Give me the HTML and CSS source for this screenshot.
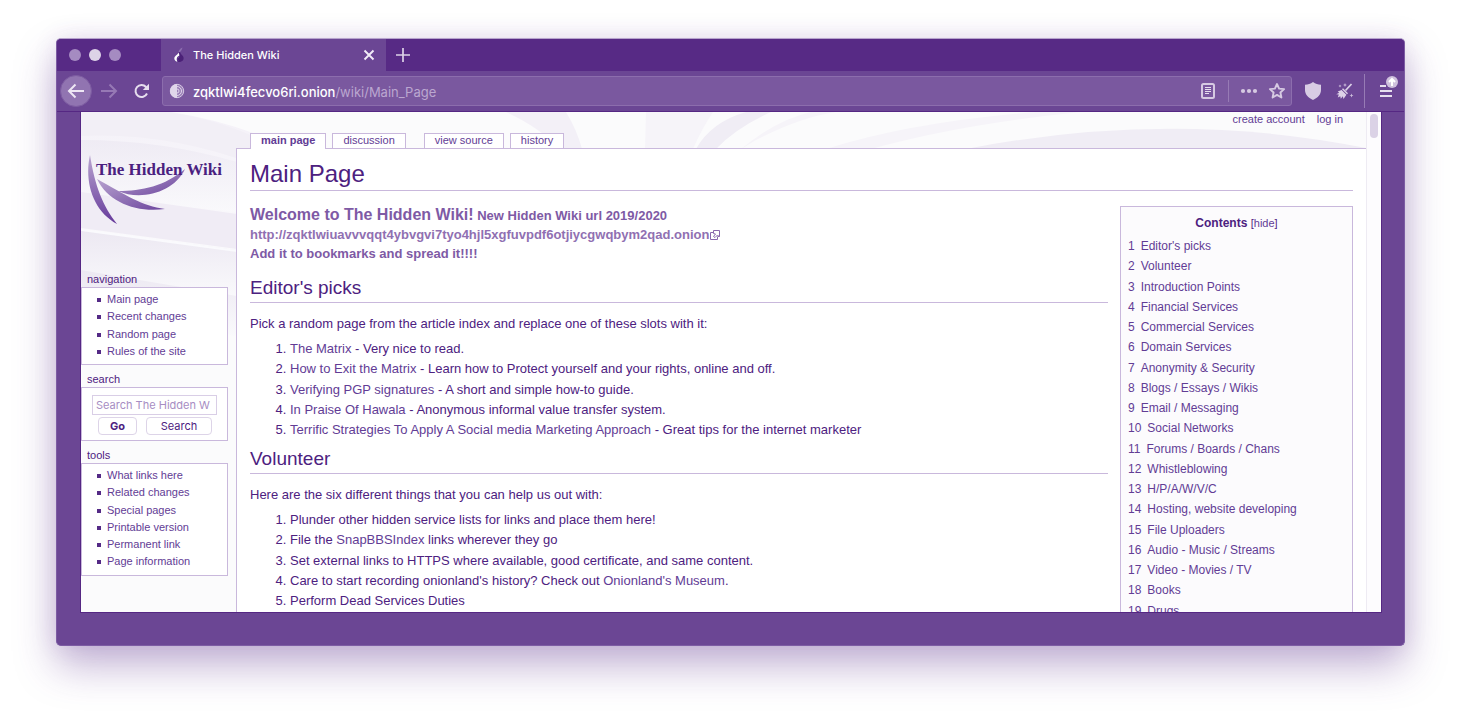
FILE: index.html
```html
<!DOCTYPE html>
<html lang="en">
<head>
<meta charset="utf-8">
<title>The Hidden Wiki</title>
<link rel="stylesheet" href="styles.css">
</head>
<body>
<div class="window">
  <header class="titlebar">
    <div class="lights"><i></i><i class="bright"></i><i></i></div>
    <div class="browser-tab">
      <svg width="16" height="16" viewBox="0 0 16 16" aria-hidden="true"><path d="M7.500 5C8 3 9 1.500 11.500.5 11 2.500 10 4 9 5z" fill="#8c6dae"/><path d="M7.500 5.500C7.500 8 4 8.500 3.700 11c-.3 2.300 1.500 4 4 4 4 0 5.500-2.500 4.700-5C11.700 8 9.500 7.500 9 5z" fill="#4b2177"/><path d="M7.500 5.500C7 8 3.300 8.500 3.300 11.500c0 2 1.700 3.200 3.200 3.200C5.300 13 6 11.500 7.800 10c.7-.8.700-3-.3-4.500" fill="#fff"/><path d="M7.800 9.200c-2.300 2-1.800 4.300-.1 4.600" stroke="#5b2f8b" stroke-width="1.200" fill="none"/></svg>
      <span class="tab-title">The Hidden Wiki</span>
      <button class="icon" aria-label="Close tab"><svg width="12" height="12" viewBox="0 0 12 12"><path d="M1.500 1.500l9 9m0-9l-9 9" stroke="#f2edf7" stroke-width="1.900" fill="none"/></svg></button>
    </div>
    <button class="icon new-tab" aria-label="New tab"><svg width="14" height="14" viewBox="0 0 14 14"><path d="M7 0v14M0 7h14" stroke="#ddd2e8" stroke-width="1.700"/></svg></button>
  </header>
  <div class="toolbar">
    <button class="icon back" aria-label="Back"><svg width="18" height="16" viewBox="0 0 18 16"><path d="M8.500 1.500L2 8l6.500 6.500M2 8h15" fill="none" stroke="#eee7f4" stroke-width="2"/></svg></button>
    <button class="icon forward" aria-label="Forward"><svg width="18" height="16" viewBox="0 0 18 16"><path d="M9.500 1.500L16 8l-6.500 6.500M16 8H1" fill="none" stroke="#9679b5" stroke-width="2"/></svg></button>
    <button class="icon reload" aria-label="Reload"><svg width="18" height="16" viewBox="0 0 18 16"><path d="M14 10.500A6 6 0 1 1 13 4l2 2" fill="none" stroke="#e6deee" stroke-width="2"/><path d="M16 .8V7H9.800z" fill="#e6deee"/></svg></button>
    <div class="urlbar">
      <svg width="16" height="16" viewBox="0 0 16 16" aria-hidden="true"><circle cx="8" cy="8" r="6.700" fill="#9c80b9" stroke="#d5c8e2"/><path d="M8 1a7 7 0 0 0 0 14z" fill="#e0d6ea"/><path d="M8 3.500a4.500 4.500 0 0 1 0 9M8 6a2 2 0 0 1 0 4" fill="none" stroke="#e0d6ea"/></svg>
      <span class="url"><b>zqktlwi4fecvo6ri.onion</b>/wiki/Main_Page</span>
      <button class="icon" aria-label="Reader view"><svg width="16" height="18" viewBox="0 0 16 18"><rect x="2" y="2" width="12" height="14" rx="1.500" fill="none" stroke="#d6cae2" stroke-width="2"/><path d="M5 5.500h6M5 7.500h6M5 9.500h6M5 11.500h4" stroke="#e6deee"/></svg></button>
      <span class="rule"></span>
      <button class="icon dots" aria-label="Page actions"><svg width="18" height="6" viewBox="0 0 18 6"><g fill="#d6cae2"><circle cx="3" cy="3" r="2.100"/><circle cx="9" cy="3" r="2.100"/><circle cx="15" cy="3" r="2.100"/></g></svg></button>
      <button class="icon" aria-label="Bookmark"><svg width="18" height="18" viewBox="0 0 18 18"><path d="M9 2l2.100 4.600 5 .5-3.700 3.400 1 5L9 12.900l-4.400 2.600 1-5L1.900 7.100l5-.5z" fill="none" stroke="#d6cae2" stroke-width="1.900" stroke-linejoin="round"/></svg></button>
    </div>
    <button class="icon shield" aria-label="Security level"><svg width="18" height="20" viewBox="0 0 18 20"><path d="M9 1c2.500 2 5 2.600 8 2.800V9c0 4.500-3 7.500-8 10C4 16.500 1 13.500 1 9V3.800C4 3.600 6.500 3 9 1z" fill="#d8cce4"/></svg></button>
    <button class="icon broom" aria-label="New identity"><svg width="18" height="18" viewBox="0 0 18 18"><path d="M15.500 2L9.500 8.500" stroke="#ddd2e8" stroke-width="1.700"/><path d="M7 6.300l5 5-1 1-5-5z" fill="#ddd2e8"/><path d="M5.600 7.900L10.400 12.700 7.500 17l-.7-2.800-2 2.600-.5-2.500-2.500 1.300 1-3-2.600-.3 3-1.500-1.500-1.200z" fill="#ddd2e8"/><path d="M9 1l.6 1.400L11 3l-1.400.6L9 5l-.6-1.400L7 3l1.400-.6zM4 2.500l.5 1 1 .5-1 .5-.5 1-.5-1-1-.5 1-.5zM15.500 11.500l.6 1.400 1.400.6-1.400.6-.6 1.400-.6-1.400-1.400-.6 1.400-.6z" fill="#cbbcdb"/></svg></button>
    <span class="rule tall"></span>
    <button class="icon menu" aria-label="Menu"><svg width="22" height="24" viewBox="0 0 22 24"><path d="M3 11h6M3 16h12M3 21h12" stroke="#e6deee" stroke-width="2"/><circle cx="15" cy="7" r="6" fill="#cfc1dd"/><path d="M15 11V4.500M12 7l3-3 3 3" fill="none" stroke="#fff" stroke-width="2"/></svg></button>
  </div>
  <div class="viewport">
    <div class="page">
      <svg class="backdrop" viewBox="0 0 1285 260" width="1285" height="260" aria-hidden="true">
        <defs>
          <linearGradient id="band" x1="0" y1="0" x2="0" y2="1"><stop offset="0" stop-color="#ece8f2"/><stop offset="1" stop-color="#fafafc"/></linearGradient>
          <linearGradient id="fall" x1="0" y1="0" x2="0" y2="1"><stop offset="0" stop-color="#f4f1f8"/><stop offset="1" stop-color="#fcfcfd"/></linearGradient>
        </defs>
        <path d="M0 0H90Q140 8 180 24V180L0 160z" fill="url(#fall)"/>
        <path d="M85 0Q135 6 190 32L180 55Q90 20 0 24V0z" fill="#f2eff6"/>
        <path d="M0 28Q80 28 156 50V100L0 84z" fill="url(#band)" opacity=".7"/>
        <path d="M0 80L156 102V137L0 116z" fill="#f0ecf5"/>
        <path d="M0 118L156 138V188L0 160z" fill="url(#band)"/>
        <path d="M0 118L156 139" stroke="#fafafd" stroke-width="2"/>
        <path d="M0 158Q80 172 156 184V225L0 180z" fill="url(#band)"/>
        <path d="M425 0H485Q496 18 501 37H478Q460 16 425 0z" fill="#f3f0f7"/>
        <path d="M565 0h67Q620 18 612 37h-48z" fill="#f6f4f9"/>
        <path d="M665 0h25Q655 16 635 37h-20Q630 10 665 0z" fill="#f0edf5"/>
        <path d="M675 28Q720 5 755 0h-25Q695 8 660 37z" fill="#f6f4f9"/>
        <path d="M835 0h120Q830 10 745 37h45Q880 12 1000 0z" fill="#f6f4f9"/>
        <path d="M885 37Q1090-3 1285 36v1z" fill="#f0edf5"/>
      </svg>
      <aside class="sidebar">
        <a class="logo" href="#" aria-label="The Hidden Wiki"><svg width="140" height="78" viewBox="0 0 140 78">
          <defs><linearGradient id="blade" x1="0" y1="0" x2="0" y2="1"><stop offset="0" stop-color="#b9a5d0"/><stop offset="1" stop-color="#65399a"/></linearGradient><linearGradient id="arc" x1="0" y1="0" x2="1" y2="1"><stop offset="0" stop-color="#b7a2cf"/><stop offset="1" stop-color="#6d469e"/></linearGradient></defs>
          <path d="M4 2C-2 29 7 58 31 71 17 53 9 34 4 2z" fill="url(#blade)"/>
          <path d="M11 26C22 49 50 60 79 56 56 53 40 42 11 26z" fill="url(#arc)"/>
          <path d="M32 38C54 48 88 40 99 16 79 33 56 38 32 38z" fill="url(#arc)"/>
          <text x="10" y="22" class="logo-text">The Hidden Wiki</text>
        </svg></a>
        <nav>
          <h3>navigation</h3>
          <ul class="portlet">
            <li><a href="#">Main page</a></li><li><a href="#">Recent changes</a></li><li><a href="#">Random page</a></li><li><a href="#">Rules of the site</a></li>
          </ul>
        </nav>
        <section>
          <h3><label for="q">search</label></h3>
          <form class="portlet search">
            <input id="q" type="text" placeholder="Search The Hidden W">
            <div class="buttons"><button type="button" class="go">Go</button><button type="button" class="find">Search</button></div>
          </form>
        </section>
        <nav>
          <h3>tools</h3>
          <ul class="portlet">
            <li><a href="#">What links here</a></li><li><a href="#">Related changes</a></li><li><a href="#">Special pages</a></li><li><a href="#">Printable version</a></li><li><a href="#">Permanent link</a></li><li><a href="#">Page information</a></li>
          </ul>
        </nav>
      </aside>
      <div class="main">
        <div class="head">
          <nav class="wiki-tabs"><a class="current" href="#">main page</a><a href="#">discussion</a><a class="apart" href="#">view source</a><a href="#">history</a></nav>
          <nav class="personal"><a href="#">create account</a><a href="#">log in</a></nav>
        </div>
        <main class="content">
          <h1>Main Page</h1>
          <div class="columns">
            <article>
              <p class="welcome"><big>Welcome to The Hidden Wiki!</big> New Hidden Wiki url 2019/2020<br><a href="#">http://zqktlwiuavvvqqt4ybvgvi7tyo4hjl5xgfuvpdf6otjiycgwqbym2qad.onion<svg class="ext" width="12" height="12" viewBox="0 0 12 12" aria-hidden="true"><path d="M4.500 3.500h-3v7h7v-3M4.500 1.500h6v6h-1.500M4.500 1.500v3l2 .5-2 2.500 1.500 1L8.500 6l1.500 1.500" fill="none" stroke="#8a68ad"/></svg></a><br>Add it to bookmarks and spread it!!!!</p>
              <h2>Editor's picks</h2>
              <p>Pick a random page from the article index and replace one of these slots with it:</p>
              <ol>
                <li><a href="#">The Matrix</a> - Very nice to read.</li>
                <li><a href="#">How to Exit the Matrix</a> - Learn how to Protect yourself and your rights, online and off.</li>
                <li><a href="#">Verifying PGP signatures</a> - A short and simple how-to guide.</li>
                <li><a href="#">In Praise Of Hawala</a> - Anonymous informal value transfer system.</li>
                <li><a href="#">Terrific Strategies To Apply A Social media Marketing Approach</a> - Great tips for the internet marketer</li>
              </ol>
              <h2>Volunteer</h2>
              <p>Here are the six different things that you can help us out with:</p>
              <ol>
                <li>Plunder other hidden service lists for links and place them here!</li>
                <li>File the <a href="#">SnapBBSIndex</a> links wherever they go</li>
                <li>Set external links to HTTPS where available, good certificate, and same content.</li>
                <li>Care to start recording onionland's history? Check out <a href="#">Onionland's Museum</a>.</li>
                <li>Perform Dead Services Duties</li>
              </ol>
            </article>
            <nav class="toc">
              <div class="toc-title"><b>Contents</b> <span>[<a href="#">hide</a>]</span></div>
              <ul>
                <li><a href="#"><span>1</span>Editor's picks</a></li>
                <li><a href="#"><span>2</span>Volunteer</a></li>
                <li><a href="#"><span>3</span>Introduction Points</a></li>
                <li><a href="#"><span>4</span>Financial Services</a></li>
                <li><a href="#"><span>5</span>Commercial Services</a></li>
                <li><a href="#"><span>6</span>Domain Services</a></li>
                <li><a href="#"><span>7</span>Anonymity &amp; Security</a></li>
                <li><a href="#"><span>8</span>Blogs / Essays / Wikis</a></li>
                <li><a href="#"><span>9</span>Email / Messaging</a></li>
                <li><a href="#"><span>10</span>Social Networks</a></li>
                <li><a href="#"><span>11</span>Forums / Boards / Chans</a></li>
                <li><a href="#"><span>12</span>Whistleblowing</a></li>
                <li><a href="#"><span>13</span>H/P/A/W/V/C</a></li>
                <li><a href="#"><span>14</span>Hosting, website developing</a></li>
                <li><a href="#"><span>15</span>File Uploaders</a></li>
                <li><a href="#"><span>16</span>Audio - Music / Streams</a></li>
                <li><a href="#"><span>17</span>Video - Movies / TV</a></li>
                <li><a href="#"><span>18</span>Books</a></li>
                <li><a href="#"><span>19</span>Drugs</a></li>
              </ul>
            </nav>
          </div>
        </main>
      </div>
    </div>
    <div class="scrollbar"><span></span></div>
  </div>
</div>
</body>
</html>
```

FILE: styles.css
```css
* { box-sizing: border-box; }
body {
  margin: 0;
  height: 100vh;
  padding: 38px 56px 74px;
  display: flex;
  overflow: hidden;
  background: #fff;
  color: #4d2180;
  font: 12px/20px "Liberation Sans", Arial, sans-serif;
}
a { color: #623c95; text-decoration: none; }
h1, h2, h3, p, ul, ol { margin: 0; padding: 0; font-weight: normal; }
button, input { font: inherit; color: inherit; margin: 0; }
svg { display: block; flex: none; }
.icon { display: flex; align-items: center; justify-content: center; flex: none; padding: 0; border: 0; background: none; }

.window {
  flex: 1;
  min-width: 0;
  display: flex;
  flex-direction: column;
  border-radius: 5px;
  background: #6b4694;
  border: 1px solid #7d5ca3;
  border-top-color: #b7a4cd;
  box-shadow: 0 20px 40px rgba(90, 43, 138, .36), 0 0 24px rgba(90, 43, 138, .1);
}
.titlebar { display: flex; flex: none; height: 32px; background: #572a85; border-radius: 4px 4px 0 0; }
.lights { display: flex; align-items: center; gap: 8px; width: 104px; padding-left: 12px; }
.lights i { width: 12px; height: 12px; border-radius: 50%; background: #a58bc1; }
.lights .bright { background: #ddd3e7; }
.browser-tab { display: flex; align-items: center; width: 225px; padding: 0 11px 0 10px; gap: 6px; background: #6b4694; color: #fff; font: 500 11px/16px Inter, sans-serif; }
.tab-title { flex: 1; }
.new-tab { width: 34px; }

.toolbar { display: flex; flex: none; align-items: center; height: 41px; padding: 0 5px 0 3px; border-bottom: 1px solid #552783; }
.back { width: 32px; height: 32px; border-radius: 50%; background: #9174b1; border: 1px solid #7d5ca1; }
.forward { width: 34px; }
.reload { width: 32px; margin-right: 4px; }
.urlbar { flex: 1; display: flex; align-items: center; height: 30px; padding: 0 5px 0 6px; background: #7a589f; border: 1px solid #8c6dad; border-radius: 3px; }
.url { flex: 1; margin-left: 8px; padding-top: 1px; color: #bba7d0; font: 13px/20px Inter, sans-serif; }
.url b { color: #fff; font-weight: 500; }
.rule { width: 1px; height: 22px; margin: 0 11px 0 12px; background: #977bb5; }
.dots { margin-right: 10px; }
.shield { margin-left: 12px; }
.broom { margin-left: 14px; }
.rule.tall { height: 34px; margin: 0 12px 0 10px; }
.menu { align-self: flex-start; margin-top: 4px; }

.viewport { flex: 1; min-height: 0; display: flex; margin: 0 22px 32px 23px; border: 1px solid #552783; border-top: 0; overflow: hidden; background: #fcfcfd; }
.page { position: relative; flex: 1; min-width: 0; display: flex; overflow: hidden; background: #fbfbfc; }
.backdrop { position: absolute; top: 0; left: 0; }
.scrollbar { width: 15px; padding: 2px 3px; background: #fdfcfe; border-left: 1px solid #eeebf3; }
.scrollbar span { display: block; width: 8px; height: 24px; border-radius: 4px; background: #dbd2e6; }

.sidebar { position: relative; flex: none; width: 155px; padding-right: 8px; font-size: 11px; line-height: 17px; }
.logo { display: block; padding: 41px 0 40px 5px; }
.logo-text { font: bold 17px "Liberation Serif", serif; fill: #4b1f80; }
.sidebar h3 { padding-left: 6px; font-size: 11px; line-height: 16px; }
.portlet { margin-bottom: 6px; padding: 3px 0 4px 15px; background: #fff; border: 1px solid #c9b8dc; }
.sidebar li { display: flex; align-items: center; gap: 6px; }
.sidebar li::before { content: ""; width: 4px; height: 4px; margin-top: 1px; background: #542a86; }
.sidebar li:nth-child(4n+2) { margin-bottom: 1px; }
.search { padding: 7px 10px 5px; }
.search input { display: block; width: 100%; height: 20px; padding: 0 3px; border: 1px solid #d9cee6; background: #fff; font: 11px/16px Inter, sans-serif; }
.search input::placeholder { color: #a78dc3; opacity: 1; }
.buttons { display: flex; gap: 9px; padding: 2px 5px 0 6px; }
.buttons button { height: 18px; padding: 0; border: 1px solid #ddd4e8; border-radius: 4px; background: #fff; font: 11px/14px Inter, sans-serif; }
.buttons .go { width: 39px; font-weight: bold; }
.buttons .find { flex: 1; }

.main { position: relative; flex: 1; min-width: 0; display: flex; flex-direction: column; }
.head { display: flex; flex: none; justify-content: space-between; height: 36px; padding: 0 23px 0 14px; font-size: 11px; line-height: 14px; }
.wiki-tabs { display: flex; align-items: flex-end; gap: 6px; }
.wiki-tabs a { position: relative; height: 15px; padding: 0 10px; background: #fff; border: 1px solid #c9b8dc; border-bottom: 0; line-height: 12px; }
.wiki-tabs .current { z-index: 1; height: 16px; margin-bottom: -1px; font-weight: bold; }
.wiki-tabs .apart { margin-left: 12px; }
.personal { display: flex; gap: 12px; }
.content { flex: 1; padding: 0 13px; background: #fff; border: 1px solid #c9b8dc; border-right: 0; border-bottom: 0; }
h1 { padding: 11px 0 2px; font-size: 24px; line-height: 28px; border-bottom: 1px solid #c9b8dc; }
.columns { display: grid; grid-template-columns: minmax(0, 1fr) 233px; gap: 12px; align-items: start; padding-top: 15px; }
article { font-size: 13px; }
.welcome { margin: -1px 0 1px; font-weight: bold; line-height: 19px; color: #7e5aa5; }
.welcome big { font-size: 16px; }
.welcome a { color: #9070b2; }
.ext { display: inline-block; vertical-align: -2px; }
h2 { padding: 12px 0 2px; font-size: 19px; line-height: 24px; border-bottom: 1px solid #c9b8dc; }
h2 + p { margin: 11px 0 5px; }
ol { padding-left: 40px; }
ol + h2 { padding-top: 7px; }
ol li:nth-child(4n+2), .toc li:nth-child(4n+2) { margin-bottom: 1px; }
.toc { padding: 6px 7px; background: #fcfbfd; border: 1px solid #c9b8dc; }
.toc-title { margin-bottom: 3px; text-align: center; }
.toc-title span { font-size: 11px; }
.toc li { list-style: none; }
.toc li span { margin-right: 6px; }
```
